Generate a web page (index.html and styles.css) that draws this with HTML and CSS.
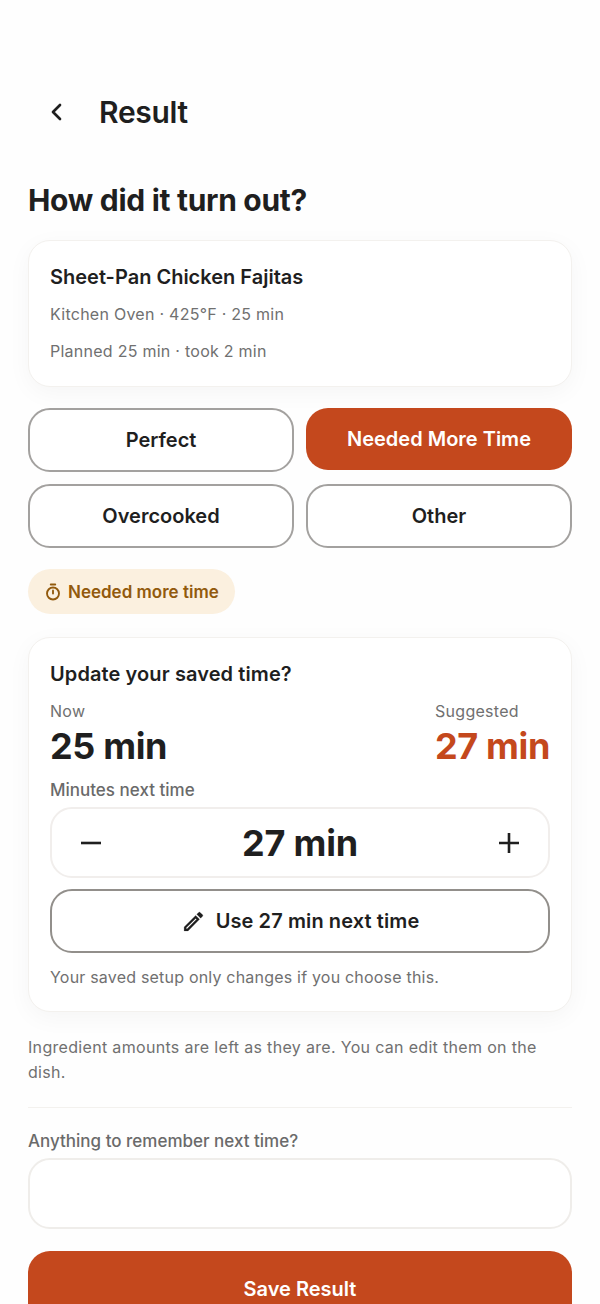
FILE: index.html
```html
<!DOCTYPE html>
<html lang="en">

<head>
    <meta charset="UTF-8">
    <meta name="viewport" content="width=device-width, initial-scale=1.0">
    <title>Result</title>
    <link rel="stylesheet" href="styles.css">
</head>

<body>
    <div class="page">
        <header class="topbar">
            <a class="back" href="javascript:;">
                <svg width="24" height="24" viewBox="0 0 24 24" fill="none" stroke="currentColor" stroke-width="2.700" stroke-linecap="round" stroke-linejoin="round"><path d="M15 5 8 12l7 7"/></svg>
            </a>
            <h1>Result</h1>
        </header>

        <h2 class="heading">How did it turn out?</h2>

        <section class="card dish">
            <h3>Sheet-Pan Chicken Fajitas</h3>
            <p>Kitchen Oven · 425°F · 25 min</p>
            <p>Planned 25 min · took 2 min</p>
        </section>

        <div class="choices">
            <button class="choice">Perfect</button>
            <button class="choice active">Needed More Time</button>
            <button class="choice">Overcooked</button>
            <button class="choice">Other</button>
        </div>

        <div class="pill">
            <svg width="18" height="18" viewBox="0 0 24 24" fill="none" stroke="currentColor" stroke-width="2.500" stroke-linecap="round"><path d="M9 2h6"/><circle cx="12" cy="14" r="8"/><path d="M12 10v4"/></svg>
            <span>Needed more time</span>
        </div>

        <section class="card update">
            <h3>Update your saved time?</h3>
            <div class="compare">
                <div>
                    <span class="small">Now</span>
                    <strong>25 min</strong>
                </div>
                <div>
                    <span class="small">Suggested</span>
                    <strong class="accent">27 min</strong>
                </div>
            </div>
            <label class="field-label">Minutes next time</label>
            <div class="stepper">
                <svg width="24" height="24" viewBox="0 0 24 24" fill="none" stroke="currentColor" stroke-width="2.600"><path d="M2 12h20"/></svg>
                <span>27 min</span>
                <svg width="24" height="24" viewBox="0 0 24 24" fill="none" stroke="currentColor" stroke-width="2.600"><path d="M2 12h20M12 2v20"/></svg>
            </div>
            <button class="use">
                <svg width="25" height="25" viewBox="0 0 24 24" fill="currentColor" stroke="currentColor" stroke-width="0.200"><path d="M3 17.250V21h3.750L17.810 9.940l-3.750-3.750L3 17.250zM5.920 19H5v-.920l9.060-9.060.920.920L5.920 19zM20.710 7.040a1 1 0 0 0 0-1.410l-2.340-2.340a1 1 0 0 0-1.410 0l-1.830 1.830 3.750 3.750 1.830-1.830z"/></svg>
                <span>Use 27 min next time</span>
            </button>
            <p class="hint">Your saved setup only changes if you choose this.</p>
        </section>

        <p class="note">Ingredient amounts are left as they are. You can edit them on the dish.</p>
        <hr class="rule">

        <label class="field-label remember">Anything to remember next time?</label>
        <textarea class="notes"></textarea>

        <button class="save">Save Result</button>
    </div>
</body>

</html>
```

FILE: styles.css
```css
* {
    margin: 0;
    padding: 0;
    box-sizing: border-box;
}

html,
body {
    height: 1304px;
    overflow: hidden;
    background-color: #fefefe;
}

body {
    font-family: Inter, "Liberation Sans", sans-serif;
    color: #1f1f1f;
}

.page {
    display: flex;
    flex-direction: column;
    padding: 91px 28px 0;
}

.topbar {
    display: flex;
    align-items: center;
    height: 42px;
}

.back {
    display: flex;
    width: 71px;
    padding-left: 17px;
    color: #1f1f1f;
}

.topbar h1 {
    font-size: 30px;
    font-weight: 600;
    letter-spacing: -0.3px;
}

.heading {
    margin-top: 46px;
    font-size: 30px;
    line-height: 42px;
    font-weight: 700;
    letter-spacing: -0.3px;
}

.card {
    background-color: #fff;
    border: 1px solid #f3f1ee;
    border-radius: 22px;
    box-shadow: 0 6px 24px rgba(0, 0, 0, 0.04);
}

.dish {
    height: 147px;
    margin-top: 19px;
    padding: 21px 21px 0;
}

.dish h3 {
    font-size: 20px;
    line-height: 30px;
    font-weight: 600;
}

.dish p {
    margin-top: 14px;
    font-size: 16px;
    line-height: 23px;
    letter-spacing: 0.26px;
    color: #707070;
}

.dish h3 + p {
    margin-top: 11px;
}

.choices {
    display: grid;
    grid-template-columns: 1fr 1fr;
    gap: 12px;
    align-items: start;
    margin-top: 21px;
}

.choice {
    height: 64px;
    background-color: #fff;
    border: 2px solid #a3a19f;
    border-radius: 22px;
    font-family: inherit;
    font-size: 20px;
    font-weight: 600;
    color: #1f1f1f;
}

.choice.active {
    height: 62px;
    border: none;
    background-color: #c4481d;
    color: #fff;
}

.pill {
    display: flex;
    align-items: center;
    gap: 6px;
    align-self: flex-start;
    height: 45px;
    margin-top: 21px;
    padding: 0 16px;
    border-radius: 23px;
    background-color: #fbf0df;
    color: #925a0d;
    font-size: 17px;
    font-weight: 600;
}

.update {
    height: 375px;
    margin-top: 23px;
    padding: 21px 21px 0;
}

.update h3 {
    font-size: 20px;
    line-height: 30px;
    font-weight: 600;
    letter-spacing: 0.1px;
}

.compare {
    display: flex;
    justify-content: space-between;
    margin-top: 11px;
}

.small {
    display: block;
    font-size: 16px;
    line-height: 22px;
    letter-spacing: 0.3px;
    color: #707070;
}

.compare strong {
    display: block;
    margin-top: 1px;
    font-size: 36px;
    line-height: 46px;
    font-weight: 700;
    letter-spacing: -0.35px;
}

.compare .accent {
    color: #c4481d;
}

.field-label {
    display: block;
    font-size: 17px;
    font-weight: 550;
    line-height: 22px;
    color: #6a6a6a;
}

.update .field-label {
    margin-top: 10px;
}

.stepper {
    display: flex;
    align-items: center;
    justify-content: space-between;
    height: 71px;
    margin-top: 6px;
    padding: 0 27px;
    border: 2px solid #f1eeec;
    border-radius: 22px;
}

.stepper span {
    font-size: 36px;
    font-weight: 700;
    letter-spacing: -0.2px;
}

.use {
    display: flex;
    align-items: center;
    justify-content: center;
    gap: 10px;
    width: 100%;
    height: 64px;
    margin-top: 11px;
    background-color: #fff;
    border: 2px solid #928f8b;
    border-radius: 22px;
    font-family: inherit;
    font-size: 20px;
    font-weight: 600;
    letter-spacing: 0.1px;
    color: #1f1f1f;
}

.hint {
    margin-top: 13px;
    font-size: 16px;
    line-height: 23px;
    letter-spacing: 0.2px;
    color: #707070;
}

.note {
    margin-top: 23px;
    font-size: 16px;
    line-height: 25px;
    letter-spacing: 0.32px;
    color: #707070;
}

.rule {
    height: 1px;
    margin-top: 22px;
    border: none;
    background-color: #f3f1ee;
}

.remember {
    margin-top: 22px;
}

.notes {
    display: block;
    width: 100%;
    height: 71px;
    margin-top: 6px;
    border: 2px solid #efedea;
    border-radius: 22px;
    background-color: #fff;
    resize: none;
}

.save {
    flex: none;
    width: 100%;
    height: 76px;
    margin-top: 22px;
    border: none;
    border-radius: 22px;
    background-color: #c4481d;
    color: #fff;
    font-family: inherit;
    font-size: 20px;
    font-weight: 600;
}
```
